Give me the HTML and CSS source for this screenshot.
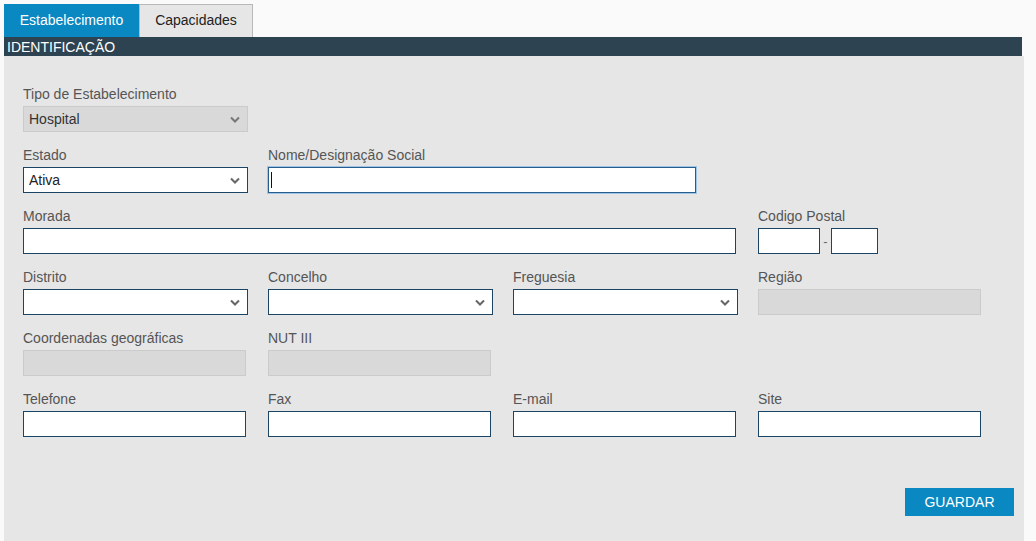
FILE: index.html
```html
<!DOCTYPE html>
<html lang="pt">
<head>
<meta charset="utf-8">
<title>Estabelecimento</title>
<link rel="stylesheet" href="styles.css">
</head>
<body>
<div class="page">
  <div class="tabs">
    <div class="tab active">Estabelecimento</div>
    <div class="tab">Capacidades</div>
  </div>
  <div class="section-title">IDENTIFICAÇÃO</div>
  <div class="panel">
    <div class="grid">
      <div class="field c1">
        <label>Tipo de Estabelecimento</label>
        <div class="select disabled"><span>Hospital</span><svg width="10" height="7" viewBox="0 0 10 7"><polyline points="1,1.5 5,5.5 9,1.5" fill="none" stroke="#777" stroke-width="2"/></svg></div>
      </div>
      <div class="field c1">
        <label>Estado</label>
        <div class="select"><span>Ativa</span><svg width="10" height="7" viewBox="0 0 10 7"><polyline points="1,1.5 5,5.5 9,1.5" fill="none" stroke="#666" stroke-width="2"/></svg></div>
      </div>
      <div class="field span2">
        <label>Nome/Designação Social</label>
        <div class="input focus w-nome"><span class="caret"></span></div>
      </div>
      <div class="field span3">
        <label>Morada</label>
        <div class="input w-morada"></div>
      </div>
      <div class="field c4">
        <label>Codigo Postal</label>
        <div class="cp">
          <div class="input w-cp1"></div>
          <span class="dash">-</span>
          <div class="input w-cp2"></div>
        </div>
      </div>
      <div class="field">
        <label>Distrito</label>
        <div class="select"><span></span><svg width="10" height="7" viewBox="0 0 10 7"><polyline points="1,1.5 5,5.5 9,1.5" fill="none" stroke="#666" stroke-width="2"/></svg></div>
      </div>
      <div class="field">
        <label>Concelho</label>
        <div class="select"><span></span><svg width="10" height="7" viewBox="0 0 10 7"><polyline points="1,1.5 5,5.5 9,1.5" fill="none" stroke="#666" stroke-width="2"/></svg></div>
      </div>
      <div class="field">
        <label>Freguesia</label>
        <div class="select"><span></span><svg width="10" height="7" viewBox="0 0 10 7"><polyline points="1,1.5 5,5.5 9,1.5" fill="none" stroke="#666" stroke-width="2"/></svg></div>
      </div>
      <div class="field">
        <label>Região</label>
        <div class="input disabled"></div>
      </div>
      <div class="field">
        <label>Coordenadas geográficas</label>
        <div class="input disabled"></div>
      </div>
      <div class="field">
        <label>NUT III</label>
        <div class="input disabled"></div>
      </div>
      <div class="field c1">
        <label>Telefone</label>
        <div class="input"></div>
      </div>
      <div class="field">
        <label>Fax</label>
        <div class="input"></div>
      </div>
      <div class="field">
        <label>E-mail</label>
        <div class="input"></div>
      </div>
      <div class="field">
        <label>Site</label>
        <div class="input"></div>
      </div>
    </div>
    <div class="actions">
      <button class="btn">GUARDAR</button>
    </div>
  </div>
</div>
</body>
</html>
```

FILE: styles.css
```css
* { box-sizing: border-box; }
html, body { margin: 0; padding: 0; }
body {
  background: #fafafa;
  font-family: "Liberation Sans", Arial, sans-serif;
  font-size: 14px;
  color: #333;
}
.page {
  padding: 4px 0 0 4px;
  width: 1024px;
}
.tabs {
  display: flex;
  height: 33px;
}
.tab {
  height: 33px;
  line-height: 31px;
  width: 114px;
  text-align: center;
  font-size: 14px;
  color: #222;
  background: #e6e6e6;
  border: 1px solid #b9b9b9;
  border-bottom: none;
}
.tab.active {
  background: #0a88c1;
  color: #fff;
  border-color: #0a88c1;
  width: 135px;
}
.section-title {
  width: 1018px;
  height: 19px;
  line-height: 20px;
  background: #2d4352;
  color: #fff;
  font-size: 14px;
  padding-left: 3px;
}
.panel {
  background: #e6e6e6;
  width: 1020px;
  height: 485px;
  padding: 29px 10px 0 19px;
}
.grid {
  display: grid;
  grid-template-columns: repeat(4, 245px);
  row-gap: 14px;
}
.c1 { grid-column: 1; }
.c4 { grid-column: 4; }
.span2 { grid-column: 2 / span 2; }
.span3 { grid-column: 1 / span 3; }
.field label {
  display: block;
  height: 18px;
  line-height: 18px;
  margin-bottom: 3px;
  color: #555;
  font-size: 14px;
}
.select {
  width: 225px;
  height: 26px;
  background: #fff;
  border: 1px solid #1c4565;
  display: flex;
  align-items: center;
  justify-content: space-between;
  padding: 0 7px 0 5px;
  color: #222;
}
.select.disabled {
  background: #d9d9d9;
  border-color: #cbcbcb;
  color: #333;
}
.input {
  width: 223px;
  height: 26px;
  background: #fff;
  border: 1px solid #1c4565;
  position: relative;
}
.input.disabled {
  background: #d9d9d9;
  border-color: #cbcbcb;
}
.input.focus {
  border-color: #285e8e;
  box-shadow: 0 0 0 1px #9ec4e6;
}
.caret {
  position: absolute;
  left: 2px;
  top: 4px;
  width: 1px;
  height: 16px;
  background: #111;
}
.w-nome { width: 428px; }
.w-morada { width: 713px; }
.cp {
  display: flex;
  align-items: center;
}
.w-cp1 { width: 62px; }
.w-cp2 { width: 47px; }
.dash {
  width: 11px;
  text-align: center;
  color: #666;
  font-size: 13px;
}
.actions {
  display: flex;
  justify-content: flex-end;
  margin-top: 51px;
}
.btn {
  width: 109px;
  height: 28px;
  background: #0a88c1;
  color: #fff;
  border: none;
  font-family: "Liberation Sans", Arial, sans-serif;
  font-size: 14px;
  padding: 0;
}
```
